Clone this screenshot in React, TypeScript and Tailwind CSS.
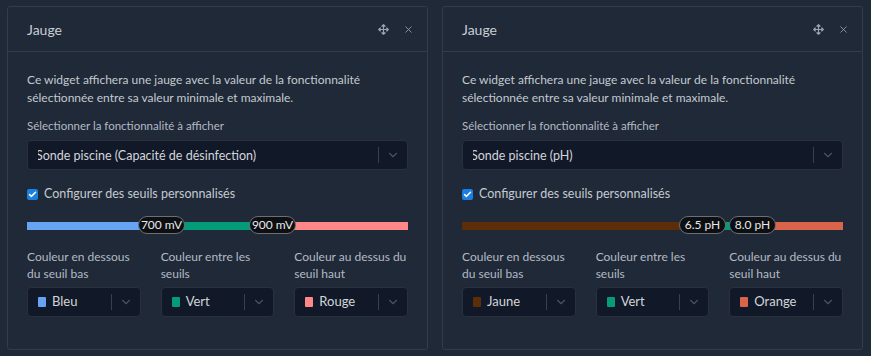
import { X, ChevronDown, Check } from "lucide-react";
import { FaArrowsAlt } from "react-icons/fa";

type Thresholds = {
  feature: string;
  low: string;
  high: string;
  lowLeft: number;
  highLeft: number;
  colors: { name: string; hex: string }[];
};

const widgets: Thresholds[] = [
  {
    feature: "Sonde piscine (Capacité de désinfection)",
    low: "700 mV",
    high: "900 mV",
    lowLeft: 111,
    highLeft: 222,
    colors: [
      { name: "Bleu", hex: "#66a3f2" },
      { name: "Vert", hex: "#049b78" },
      { name: "Rouge", hex: "#ff8787" },
    ],
  },
  {
    feature: "Sonde piscine (pH)",
    low: "6.5 pH",
    high: "8.0 pH",
    lowLeft: 217,
    highLeft: 267,
    colors: [
      { name: "Jaune", hex: "#5c2d08" },
      { name: "Vert", hex: "#049b78" },
      { name: "Orange", hex: "#d9644a" },
    ],
  },
];

const labels = ["Couleur en dessous du seuil bas", "Couleur entre les seuils", "Couleur au dessus du seuil haut"];

const PILL = 47;

function SelectBox({ children, className = "" }: { children: React.ReactNode; className?: string }) {
  return (
    <div className={`flex h-[30px] items-center rounded-[4px] border border-[#2a313d] bg-[#111827] ${className}`}>
      <div className="ml-[10px] flex min-w-0 flex-1 items-center overflow-hidden">{children}</div>
      <span className="h-[16px] w-px bg-[#3a414d]" />
      <ChevronDown className="mx-[7px] h-[14px] w-[14px] text-[#4b5260]" strokeWidth={2} />
    </div>
  );
}

function GaugeWidget({ w }: { w: Thresholds }) {
  const lowCenter = w.lowLeft + PILL / 2;
  const highCenter = w.highLeft + PILL / 2;
  return (
    <section className="flex h-[344px] w-[421px] flex-col rounded-[3px] border border-[#323c4c] bg-[#1f2937]">
      <header className="flex h-[45px] items-center justify-between border-b border-[#323c4c] pl-[19px] pr-[13px]">
        <h2 className="text-[14px] text-[#c9ced6]">Jauge</h2>
        <div className="flex items-center gap-[14px] text-[#9aa3af]">
          <FaArrowsAlt className="h-[11px] w-[11px]" />
          <X className="h-[11px] w-[11px]" strokeWidth={1.8} />
        </div>
      </header>

      <div className="px-[19px] pt-[19px]">
        <p className="text-[12px] leading-[18px] text-[#c4c9d1]">
          Ce widget affichera une jauge avec la valeur de la fonctionnalité
          <br />
          sélectionnée entre sa valeur minimale et maximale.
        </p>

        <label className="mt-[10px] block text-[11.5px] leading-[18px] text-[#b4bac4]">
          Sélectionner la fonctionnalité à afficher
        </label>
        <SelectBox className="mt-[5px] h-[29px]">
          <span className="-ml-[2px] whitespace-nowrap pt-[2px] text-[12.5px] text-[#d1d5db]">{w.feature}</span>
        </SelectBox>

        <div className="mt-[14px] flex h-[20px] items-center gap-[6px]">
          <span className="flex h-[11px] w-[11px] items-center justify-center rounded-[2px] bg-[#1a7fe0]">
            <Check className="h-[9px] w-[9px] text-white" strokeWidth={4} />
          </span>
          <span className="text-[12.5px] text-[#c4c9d1]">Configurer des seuils personnalisés</span>
        </div>

        <div className="relative mt-[12px] h-[18px]">
          <div className="absolute inset-x-0 top-[6px] flex h-[8px]">
            <div style={{ width: lowCenter, background: w.colors[0].hex }} className="h-full" />
            <div style={{ width: highCenter - lowCenter, background: w.colors[1].hex }} className="h-full" />
            <div style={{ background: w.colors[2].hex }} className="h-full flex-1" />
          </div>
          {[
            { text: w.low, left: w.lowLeft },
            { text: w.high, left: w.highLeft },
          ].map((p) => (
            <span
              key={p.text}
              style={{ left: p.left }}
              className="absolute top-0 flex h-[18px] w-[47px] items-center justify-center rounded-full border border-[#6b6f76] bg-[#0d0f12] text-[12px] text-[#e6e8eb]"
            >
              {p.text}
            </span>
          ))}
        </div>

        <div className="mt-[14px] grid grid-cols-3 gap-x-[20px]">
          {w.colors.map((c, i) => (
            <div key={labels[i]}>
              <p className="h-[34px] text-[12px] leading-[17px] text-[#b4bac4]">{labels[i]}</p>
              <SelectBox className="mt-[5px]">
                <span className="h-[10px] w-[8px] shrink-0 rounded-[1px]" style={{ background: c.hex }} />
                <span className="ml-[6px] text-[13px] text-[#d1d5db]">{c.name}</span>
              </SelectBox>
            </div>
          ))}
        </div>
      </div>
    </section>
  );
}

export default function App() {
  return (
    <div
      className="h-[356px] w-[871px] bg-[#1f2937] pl-[7px] pt-[6px]"
      style={{ fontFamily: 'Lato, "Noto Sans", sans-serif' }}
    >
      <div className="flex gap-[14px]">
        {widgets.map((w) => (
          <GaugeWidget key={w.feature} w={w} />
        ))}
      </div>
    </div>
  );
}
